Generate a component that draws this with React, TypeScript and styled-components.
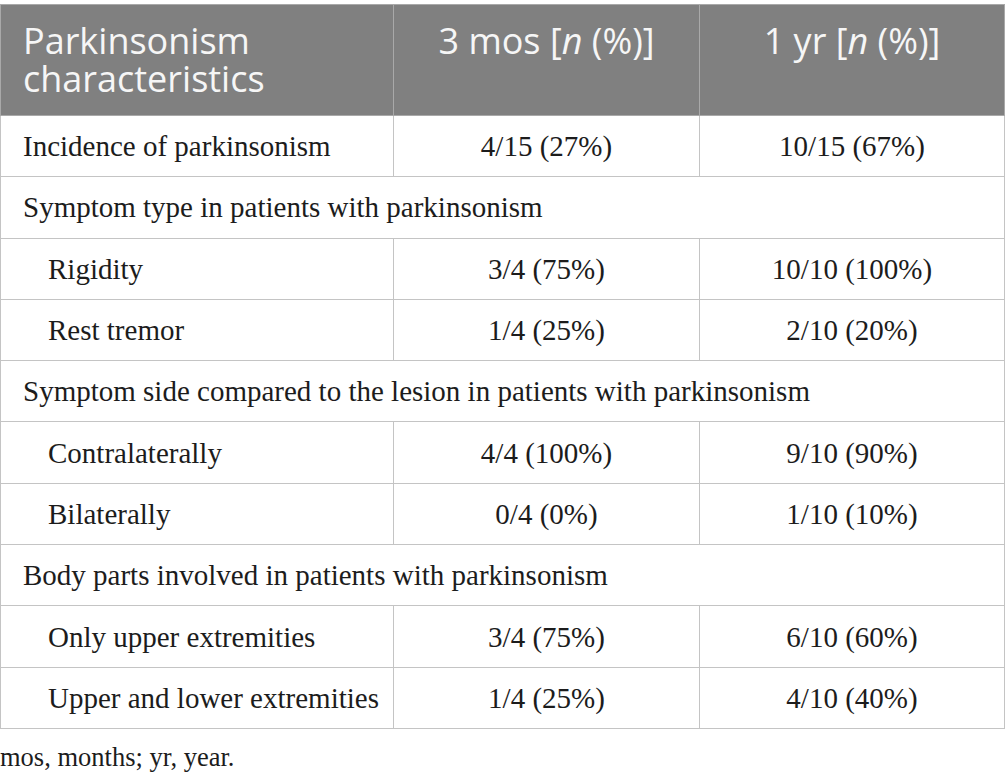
import React from "react";
import styled, { createGlobalStyle } from "styled-components";

const Global = createGlobalStyle`
  html, body { margin: 0; padding: 0; background: #ffffff; }
  body { font-family: "Liberation Serif", "Times New Roman", serif; color: #1c1c1c; }
`;

const Wrap = styled.div`
  padding-top: 4px;
  width: 1004px;
`;

const Table = styled.table`
  border-collapse: collapse;
  table-layout: fixed;
  width: 1004px;
`;

const Col = styled.col<{ $w: number }>`
  width: ${(p) => p.$w}px;
`;

const HeadCell = styled.th<{ $center?: boolean }>`
  background: #808080;
  color: #f6f6f6;
  font-family: "Open Sans", "Liberation Sans", sans-serif;
  font-weight: 400;
  font-size: 36px;
  line-height: 38px;
  text-align: ${(p) => (p.$center ? "center" : "left")};
  vertical-align: top;
  padding: 17px 22px 17px 22px;
  height: 76px;
  border: 1px solid #a9a9a9;
`;

const HeadLine = styled.span`
  display: block;
`;

const Cell = styled.td<{ $center?: boolean; $indent?: boolean }>`
  font-size: 29px;
  line-height: 34px;
  height: 60.3px;
  padding: 0 0 0 ${(p) => (p.$center ? 0 : p.$indent ? 47 : 22)}px;
  text-align: ${(p) => (p.$center ? "center" : "left")};
  vertical-align: middle;
  border: 1px solid #c4c4c4;
  white-space: nowrap;
`;

const Note = styled.p`
  margin: 12px 0 0 0;
  font-size: 26.5px;
  line-height: 32px;
`;

type Row =
  | { kind: "group"; label: string }
  | { kind: "data"; label: string; a: string; b: string; indent?: boolean };

const rows: Row[] = [
  { kind: "data", label: "Incidence of parkinsonism", a: "4/15 (27%)", b: "10/15 (67%)" },
  { kind: "group", label: "Symptom type in patients with parkinsonism" },
  { kind: "data", label: "Rigidity", a: "3/4 (75%)", b: "10/10 (100%)", indent: true },
  { kind: "data", label: "Rest tremor", a: "1/4 (25%)", b: "2/10 (20%)", indent: true },
  { kind: "group", label: "Symptom side compared to the lesion in patients with parkinsonism" },
  { kind: "data", label: "Contralaterally", a: "4/4 (100%)", b: "9/10 (90%)", indent: true },
  { kind: "data", label: "Bilaterally", a: "0/4 (0%)", b: "1/10 (10%)", indent: true },
  { kind: "group", label: "Body parts involved in patients with parkinsonism" },
  { kind: "data", label: "Only upper extremities", a: "3/4 (75%)", b: "6/10 (60%)", indent: true },
  { kind: "data", label: "Upper and lower extremities", a: "1/4 (25%)", b: "4/10 (40%)", indent: true },
];

export default function App() {
  return (
    <Wrap>
      <Global />
      <Table>
        <colgroup>
          <Col $w={393} />
          <Col $w={306} />
          <Col $w={305} />
        </colgroup>
        <thead>
          <tr>
            <HeadCell>
              <HeadLine>Parkinsonism</HeadLine>
              <HeadLine>characteristics</HeadLine>
            </HeadCell>
            <HeadCell $center>
              3 mos [<i>n</i> (%)]
            </HeadCell>
            <HeadCell $center>
              1 yr [<i>n</i> (%)]
            </HeadCell>
          </tr>
        </thead>
        <tbody>
          {rows.map((r, i) =>
            r.kind === "group" ? (
              <tr key={i}>
                <Cell colSpan={3}>{r.label}</Cell>
              </tr>
            ) : (
              <tr key={i}>
                <Cell $indent={r.indent}>{r.label}</Cell>
                <Cell $center>{r.a}</Cell>
                <Cell $center>{r.b}</Cell>
              </tr>
            )
          )}
        </tbody>
      </Table>
      <Note>mos, months; yr, year.</Note>
    </Wrap>
  );
}
